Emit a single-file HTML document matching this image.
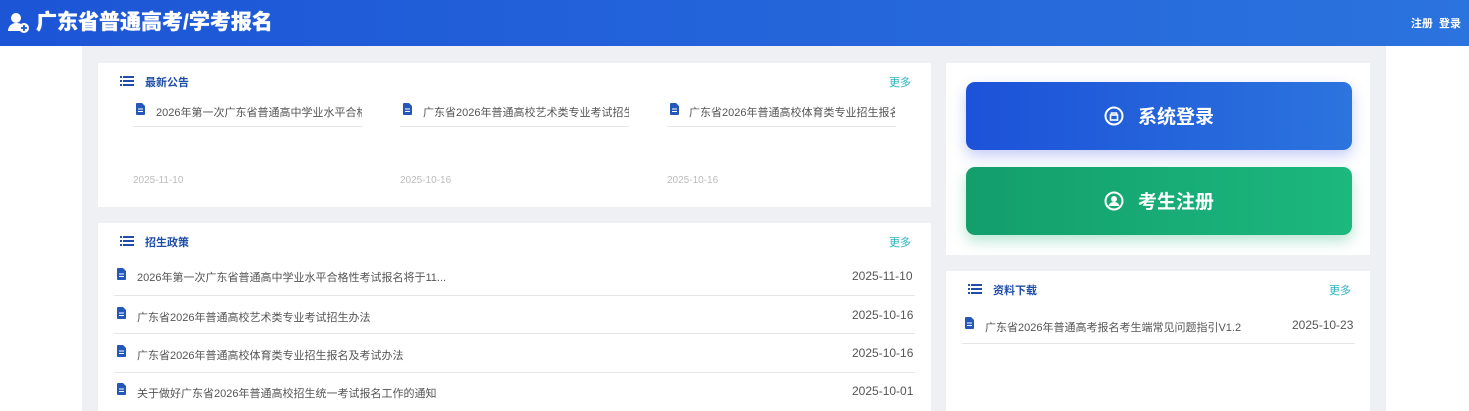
<!DOCTYPE html>
<html><head><meta charset="utf-8"><style>
*{margin:0;padding:0;box-sizing:border-box}
body{width:1469px;height:411px;overflow:hidden;background:#fff;font-family:"Liberation Sans","Noto Sans CJK SC",sans-serif;position:relative}
.hdr{position:absolute;left:0;top:0;width:1469px;height:46px;background:linear-gradient(90deg,#1c55d6,#2b73de)}
.title{position:absolute;left:36px;top:9px;color:#fff;font-size:21px;font-weight:900;line-height:28px;text-shadow:0 0 0.6px #fff}
.tr{position:absolute;right:8px;top:15px;color:#fff;font-size:11px;font-weight:bold}
.wrap{position:absolute;left:82px;top:46px;width:1304px;height:365px;background:#eef0f4}
.card{position:absolute;background:#fff}
.a{position:absolute;white-space:nowrap}
.h{font-size:11px;font-weight:bold;color:#1f4ea8}
.more{font-size:11px;color:#2bb3c0}
.t{font-size:11px;color:#555}
.d{font-size:12px;color:#555}
.dg{font-size:10px;color:#bbb}
.line{position:absolute;height:1px;background:#e6e6e6}
.btn{position:absolute;left:966px;width:386px;height:68px;border-radius:9px;color:#fff;font-size:19px;font-weight:bold;text-align:center;line-height:72px}
</style></head><body>
<div class="hdr"></div>
<svg style="position:absolute;left:8px;top:12px" width="22" height="22" viewBox="0 0 22 22"><circle cx="8" cy="6" r="5" fill="#fff"/><path d="M0 19c0-5 4-8 8-8s6 1 7 3v5z" fill="#fff"/><circle cx="16" cy="16" r="5" fill="#fff"/><path d="M16 13v6M13 16h6" stroke="#1c55d6" stroke-width="1.8"/></svg>
<div class="title">广东省普通高考/学考报名</div>
<div class="tr">注册&nbsp;&nbsp;登录</div>
<div class="wrap"></div>

<div class="card" style="left:98px;top:63px;width:833px;height:144px"></div>
<div class="card" style="left:98px;top:223px;width:833px;height:188px"></div>
<div class="card" style="left:946px;top:63px;width:424px;height:192px"></div>
<div class="card" style="left:946px;top:271px;width:424px;height:140px"></div>

<svg width="0" height="0" style="position:absolute"><defs>
<symbol id="ls" viewBox="0 0 14 10"><rect x="0" y="0" width="2" height="2" fill="#1f4ea8"/><rect x="3" y="0" width="11" height="2" fill="#1f4ea8"/><rect x="0" y="4" width="2" height="2" fill="#1f4ea8"/><rect x="3" y="4" width="11" height="2" fill="#1f4ea8"/><rect x="0" y="8" width="2" height="2" fill="#1f4ea8"/><rect x="3" y="8" width="11" height="2" fill="#1f4ea8"/></symbol>
<symbol id="doc" viewBox="0 0 9 12"><path d="M0 1a1 1 0 0 1 1-1h5l3 3v8a1 1 0 0 1-1 1H1a1 1 0 0 1-1-1z" fill="#2458b8"/><path d="M2 6h5M2 8.5h5" stroke="#fff" stroke-width="1"/></symbol>
</defs></svg>

<!-- card1 -->
<svg style="position:absolute;left:120px;top:76px" width="14" height="10"><use href="#ls"/></svg>
<div class="a h" style="left:145px;top:74px">最新公告</div>
<div class="a more" style="left:889px;top:74px">更多</div>
<svg style="position:absolute;left:136px;top:103px" width="9" height="12"><use href="#doc"/></svg>
<div class="a t" style="left:156px;top:104px;width:206px;overflow:hidden">2026年第一次广东省普通高中学业水平合格性考试报名</div>
<div class="line" style="left:133px;top:126px;width:229px"></div>
<svg style="position:absolute;left:403px;top:103px" width="9" height="12"><use href="#doc"/></svg>
<div class="a t" style="left:423px;top:104px;width:206px;overflow:hidden">广东省2026年普通高校艺术类专业考试招生办法</div>
<div class="line" style="left:400px;top:126px;width:229px"></div>
<svg style="position:absolute;left:670px;top:103px" width="9" height="12"><use href="#doc"/></svg>
<div class="a t" style="left:689px;top:104px;width:206px;overflow:hidden">广东省2026年普通高校体育类专业招生报名</div>
<div class="line" style="left:667px;top:126px;width:229px"></div>
<div class="a dg" style="left:133px;top:175px">2025-11-10</div>
<div class="a dg" style="left:400px;top:175px">2025-10-16</div>
<div class="a dg" style="left:667px;top:175px">2025-10-16</div>

<!-- card2 -->
<svg style="position:absolute;left:120px;top:236px" width="14" height="10"><use href="#ls"/></svg>
<div class="a h" style="left:145px;top:234px">招生政策</div>
<div class="a more" style="left:889px;top:234px">更多</div>
<svg style="position:absolute;left:117px;top:268px" width="9" height="12"><use href="#doc"/></svg>
<div class="a t" style="left:137px;top:269px">2026年第一次广东省普通高中学业水平合格性考试报名将于11...</div>
<div class="a d" style="left:852px;top:269px">2025-11-10</div>
<div class="line" style="left:114px;top:295px;width:801px"></div>
<svg style="position:absolute;left:117px;top:307px" width="9" height="12"><use href="#doc"/></svg>
<div class="a t" style="left:137px;top:309px">广东省2026年普通高校艺术类专业考试招生办法</div>
<div class="a d" style="left:852px;top:308px">2025-10-16</div>
<div class="line" style="left:114px;top:333px;width:801px"></div>
<svg style="position:absolute;left:117px;top:345px" width="9" height="12"><use href="#doc"/></svg>
<div class="a t" style="left:137px;top:347px">广东省2026年普通高校体育类专业招生报名及考试办法</div>
<div class="a d" style="left:852px;top:346px">2025-10-16</div>
<div class="line" style="left:114px;top:372px;width:801px"></div>
<svg style="position:absolute;left:117px;top:383px" width="9" height="12"><use href="#doc"/></svg>
<div class="a t" style="left:137px;top:385px">关于做好广东省2026年普通高校招生统一考试报名工作的通知</div>
<div class="a d" style="left:852px;top:384px">2025-10-01</div>

<!-- buttons -->
<div class="btn" style="top:82px;background:linear-gradient(90deg,#1c52d8,#2c74de);box-shadow:0 6px 14px rgba(60,90,230,.3)"><svg style="vertical-align:-3px;margin-right:14px" width="20" height="20" viewBox="0 0 20 20"><circle cx="10" cy="10" r="8.5" fill="none" stroke="#fff" stroke-width="2"/><rect x="6.5" y="9" width="7" height="5" fill="none" stroke="#fff" stroke-width="1.6"/><path d="M7.5 9V7h5v2" fill="none" stroke="#fff" stroke-width="1.6"/></svg>系统登录</div>
<div class="btn" style="top:167px;background:linear-gradient(90deg,#139e6c,#1cb87e);box-shadow:0 6px 14px rgba(20,170,110,.3)"><svg style="vertical-align:-3px;margin-right:14px" width="20" height="20" viewBox="0 0 20 20"><circle cx="10" cy="10" r="8.5" fill="none" stroke="#fff" stroke-width="2"/><circle cx="10" cy="8" r="3" fill="#fff"/><path d="M4.5 15c1-3 3-4 5.5-4s4.5 1 5.5 4z" fill="#fff"/></svg>考生注册</div>

<!-- card4 -->
<svg style="position:absolute;left:968px;top:284px" width="14" height="10"><use href="#ls"/></svg>
<div class="a h" style="left:993px;top:282px">资料下载</div>
<div class="a more" style="left:1329px;top:282px">更多</div>
<svg style="position:absolute;left:965px;top:317px" width="9" height="12"><use href="#doc"/></svg>
<div class="a t" style="left:985px;top:319px">广东省2026年普通高考报名考生端常见问题指引V1.2</div>
<div class="a d" style="left:1292px;top:318px">2025-10-23</div>
<div class="line" style="left:962px;top:343px;width:393px"></div>
</body></html>
